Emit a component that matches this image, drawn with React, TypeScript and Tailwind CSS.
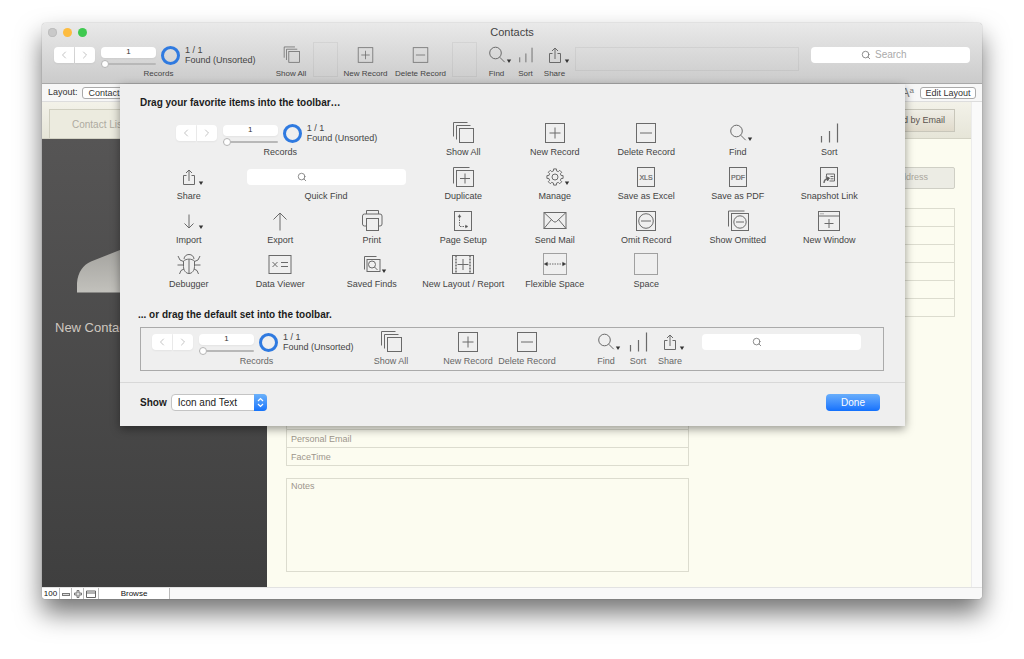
import type { ReactNode } from "react";
import { ChevronLeft, ChevronRight, Search } from "lucide-react";
import clsx from "clsx";

const LABEL = "whitespace-nowrap text-center";

function gearPath(cx: number, cy: number) {
  const points: string[] = [];
  for (let i = 0; i < 8; i++) {
    const base = (i * Math.PI) / 4;
    const corners: [number, number][] = [
      [-0.24, 6.3],
      [-0.17, 8.2],
      [0.17, 8.2],
      [0.24, 6.3],
    ];
    corners.forEach(([offset, r]) => {
      const a = base + offset;
      points.push(`${(cx + r * Math.sin(a)).toFixed(2)} ${(cy - r * Math.cos(a)).toFixed(2)}`);
    });
  }
  return `M${points.join("L")}Z`;
}

// All glyphs share a 32x26 box centred on 16,13
const GLYPHS: Record<string, ReactNode> = {
  showAll: (
    <>
      <path d="M6.5 16.5v-14H20.5M9.5 19.5v-14H23.5" />
      <rect x="12.5" y="8.5" width="14" height="14" />
    </>
  ),
  newRecord: (
    <>
      <rect x="6.5" y="3.5" width="19" height="19" />
      <path d="M10.5 13h11M16 7.5v11" />
    </>
  ),
  deleteRecord: (
    <>
      <rect x="6.5" y="3.5" width="19" height="19" />
      <path d="M10 13h12" />
    </>
  ),
  find: (
    <>
      <circle cx="14.5" cy="11" r="5.8" />
      <path d="M18.7 15.2l5 5" />
    </>
  ),
  sort: <path d="M8.5 22.5V16M16.5 22.5V11M24.5 22.5V3.5" strokeWidth="1.2" />,
  share: (
    <>
      <path d="M13.5 11.5h-3v9h11v-9h-3M16 17V6" />
      <path d="M13 9l3-3 3 3" />
    </>
  ),
  duplicate: (
    <>
      <path d="M6.5 19.5v-16H22.5" />
      <rect x="9.5" y="6.5" width="17" height="16" />
      <path d="M13 14.5h10M18 9.5v10" />
    </>
  ),
  manage: (
    <>
      <path d={gearPath(16, 13)} strokeLinejoin="round" />
      <circle cx="16" cy="13" r="3" />
    </>
  ),
  excel: (
    <>
      <rect x="7.5" y="3.5" width="17" height="19" />
      <text x="16" y="15.5" textAnchor="middle" fontSize="7" fill="#666" stroke="#666" strokeWidth="0.2">XLS</text>
    </>
  ),
  pdf: (
    <>
      <rect x="7.5" y="3.5" width="17" height="19" />
      <text x="16" y="15.5" textAnchor="middle" fontSize="7" fill="#666" stroke="#666" strokeWidth="0.2">PDF</text>
    </>
  ),
  snapshot: (
    <>
      <rect x="7.5" y="3.5" width="17" height="19" />
      <path d="M13.5 12v-2h8v7h-5M17.5 12.5h3M17.5 14.8h3" />
      <path d="M11 19c0-2.500 1.500-4 4-4.500" strokeWidth="1.4" />
      <path d="M13 12.500l3.500 1.500-2 3z" fill="#555" />
    </>
  ),
  importIcon: <path d="M16 6.5v13.5M11.5 15.5l4.500 4.500 4.500-4.500" />,
  exportIcon: <path d="M16 22.5V5M9.5 11.500l6.500-6.500 6.500 6.500" />,
  print: (
    <>
      <path d="M10.500 6V2.500h12V6" />
      <path d="M10.500 18H8.500a2 2 0 0 1-2-2V8a2 2 0 0 1 2-2h15.500a2 2 0 0 1 2 2v8a2 2 0 0 1-2 2h-1.500" />
      <rect x="10.500" y="10.500" width="12" height="12" />
    </>
  ),
  pageSetup: (
    <>
      <rect x="7.5" y="3.5" width="17" height="19" />
      <path d="M12.5 9v9.500h6.500" strokeDasharray="1.500 1" />
      <path d="M11 9l1.500-2.500L14 9zM18.500 17l2.500 1.500-2.500 1.500z" fill="#555" strokeWidth="0.4" />
    </>
  ),
  mail: (
    <>
      <rect x="5" y="4.5" width="22" height="16" />
      <path d="M5 4.500l9.500 9q1.500 1.300 3 0l9.500-9M5 20.500l7.500-9M27 20.500l-7.500-9" />
    </>
  ),
  omit: (
    <>
      <rect x="6.5" y="3.5" width="19" height="19" />
      <circle cx="16" cy="13" r="7.300" />
      <path d="M11 13h10" />
    </>
  ),
  showOmitted: (
    <>
      <path d="M6.5 18.500V3H22.500" />
      <rect x="9.5" y="5.5" width="17" height="17" />
      <circle cx="18" cy="14" r="6.200" />
      <path d="M14 14h8" />
    </>
  ),
  newWindow: (
    <>
      <rect x="5.5" y="3.5" width="21" height="19" />
      <path d="M5.500 8h21M11.500 15.500h9M16 11v9" />
      <path d="M7.500 5.800h1M9.500 5.800h1" />
    </>
  ),
  debugger: (
    <>
      <path d="M11 7c.3-2.800 2.200-4.500 5-4.500s4.700 1.700 5 4.500" />
      <path d="M10.500 9c3-2.500 8-2.500 11 0v5.500c0 4-2.500 7-5.500 7s-5.500-3-5.500-7zM16 7.500v14" />
      <path d="M10.500 9.500L7 8 5 4M21.500 9.500L25 8l2-4M10.500 13H4.500M21.500 13h6M11 17l-3 1.500-1.500 3.500M21 17l3 1.500 1.500 3.500" />
    </>
  ),
  dataViewer: (
    <>
      <rect x="5" y="3.5" width="22" height="18" />
      <path d="M8.500 10l5 5M13.500 10l-5 5M17 10.500h7M17 14.500h7" />
    </>
  ),
  savedFinds: (
    <>
      <path d="M8.5 17.500V4.500H20.500" />
      <rect x="11" y="7.500" width="13" height="12" />
      <circle cx="16" cy="12.500" r="3.500" />
      <path d="M18.500 15l3 3" />
    </>
  ),
  newLayout: (
    <>
      <rect x="5.5" y="3.5" width="21" height="18" />
      <path d="M9 3.500v18M23 3.500v18" strokeDasharray="2 1" strokeWidth="1.500" />
      <path d="M10.500 12.500h11M16 7v11" />
    </>
  ),
  flexible: (
    <>
      <rect x="4.5" y="1.5" width="23" height="21" stroke="#a0a0a0" />
      <path d="M8 12h16" strokeDasharray="1.500 1" />
      <path d="M8.500 10L5 12l3.500 2zM23.500 10l3.500 2-3.500 2z" fill="#333" strokeWidth="0.3" />
    </>
  ),
  space: <rect x="4.5" y="1.5" width="23" height="21" stroke="#a0a0a0" />,
};

function Glyph({ name, menu, small }: { name: string; menu?: boolean; small?: boolean }) {
  return (
    <svg
      viewBox="0 0 32 26"
      className={clsx("shrink-0 font-['Liberation_Sans',sans-serif]", small ? "h-5 w-[25px]" : "h-[26px] w-8")}
      fill="none"
      stroke="#6a6a6a"
      aria-hidden="true"
    >
      {GLYPHS[name]}
      {menu && <path d="M25.800 17.500h4.400L28 21z" fill="#333" stroke="none" />}
    </svg>
  );
}

type ToolProps = { label: string; icon: string; menu?: boolean; small?: boolean; className?: string };

function Tool({ label, icon, menu, small, className }: ToolProps) {
  return (
    <button type="button" className={clsx("flex flex-col items-center", className)}>
      <span className="flex h-[26px] items-center justify-center">
        <Glyph name={icon} menu={menu} small={small} />
      </span>
      <span className={LABEL}>{label}</span>
    </button>
  );
}

function Records({ className }: { className?: string }) {
  return (
    <div className={clsx("flex w-[209px] flex-col", className)}>
      <div className="flex h-[26px] items-center">
        <div className="flex h-4 gap-px text-[#c4c4c4]">
          <button type="button" aria-label="Previous record" className="flex w-5 items-center justify-center rounded-l-sm bg-white shadow-xs">
            <ChevronLeft className="h-3 w-3" />
          </button>
          <button type="button" aria-label="Next record" className="flex w-5 items-center justify-center rounded-r-sm bg-white shadow-xs">
            <ChevronRight className="h-3 w-3" />
          </button>
        </div>
        <div className="ml-1.5 flex w-[55px] flex-col pt-1">
          <input
            aria-label="Current record"
            defaultValue="1"
            className="h-[11px] w-full rounded-sm bg-white text-center text-[8px] text-[#333] shadow-xs outline-none"
          />
          <input
            type="range"
            aria-label="Record slider"
            defaultValue="0"
            className="mt-0.5 h-2 w-full appearance-none bg-transparent [&::-webkit-slider-runnable-track]:h-0.5 [&::-webkit-slider-runnable-track]:rounded-full [&::-webkit-slider-runnable-track]:bg-[#b8b8b8] [&::-webkit-slider-thumb]:-mt-[3px] [&::-webkit-slider-thumb]:h-2 [&::-webkit-slider-thumb]:w-2 [&::-webkit-slider-thumb]:appearance-none [&::-webkit-slider-thumb]:rounded-full [&::-webkit-slider-thumb]:border [&::-webkit-slider-thumb]:border-[#b5b5b5] [&::-webkit-slider-thumb]:bg-white"
          />
        </div>
        <div className="ml-[5px] h-[19px] w-[19px] shrink-0 rounded-full border-3 border-[#2f7ae0]" />
        <div className="ml-[5px] text-[9px] leading-[10px] whitespace-nowrap text-[#444]">
          <div>1 / 1</div>
          <div>Found (Unsorted)</div>
        </div>
      </div>
      <span className={LABEL}>Records</span>
    </div>
  );
}

function SearchBox({ label, placeholder }: { label: string; placeholder?: string }) {
  return (
    <label className="flex h-4 w-[159px] shrink-0 items-center rounded-sm bg-white pl-[50px]">
      <Search className="h-[10px] w-[10px] shrink-0 text-[#777]" />
      <input
        aria-label={label}
        placeholder={placeholder}
        className="ml-1 w-full min-w-0 bg-transparent text-[10px] outline-none placeholder:text-[#aaa]"
      />
    </label>
  );
}

const PALETTE: ToolProps[] = [
  { label: "Duplicate", icon: "duplicate" },
  { label: "Manage", icon: "manage", menu: true },
  { label: "Save as Excel", icon: "excel" },
  { label: "Save as PDF", icon: "pdf" },
  { label: "Snapshot Link", icon: "snapshot" },
  { label: "Import", icon: "importIcon", menu: true },
  { label: "Export", icon: "exportIcon" },
  { label: "Print", icon: "print" },
  { label: "Page Setup", icon: "pageSetup" },
  { label: "Send Mail", icon: "mail" },
  { label: "Omit Record", icon: "omit" },
  { label: "Show Omitted", icon: "showOmitted" },
  { label: "New Window", icon: "newWindow" },
  { label: "Debugger", icon: "debugger" },
  { label: "Data Viewer", icon: "dataViewer" },
  { label: "Saved Finds", icon: "savedFinds", menu: true },
  { label: "New Layout / Report", icon: "newLayout" },
  { label: "Flexible Space", icon: "flexible" },
  { label: "Space", icon: "space" },
];

function Toolbar() {
  return (
    <header className="h-[61px] rounded-t border-b border-[#a8a8a8] bg-linear-to-b from-[#e9e9e9] to-[#cbcbcb]">
      <div className="grid h-[19px] grid-cols-3 items-center px-1.5">
        <div className="flex gap-1.5">
          <button type="button" aria-label="Close" className="h-[9px] w-[9px] rounded-full bg-[#c9c9c9] ring-1 ring-[#bdbdbd] ring-inset" />
          <button type="button" aria-label="Minimize" className="h-[9px] w-[9px] rounded-full bg-[#fdbc40]" />
          <button type="button" aria-label="Zoom" className="h-[9px] w-[9px] rounded-full bg-[#3fc950]" />
        </div>
        <h1 className="text-center text-[11px] text-[#444]">Contacts</h1>
      </div>
      <div className="flex pr-3 pl-3 text-[8px] leading-3 text-[#444]">
        <Records />
        <Tool label="Show All" icon="showAll" small className="ml-1.5 w-11" />
        <div className="h-[35px] w-[25px] border border-black/5" />
        <Tool label="New Record" icon="newRecord" small className="w-[55px]" />
        <Tool label="Delete Record" icon="deleteRecord" small className="w-[55px]" />
        <div className="ml-1 h-[35px] w-[25px] border border-black/5" />
        <Tool label="Find" icon="find" menu className="ml-[5px] w-[29px]" />
        <Tool label="Sort" icon="sort" small className="w-[29px]" />
        <Tool label="Share" icon="share" menu className="w-[29px]" />
        <div className="mt-[5px] ml-1.5 h-6 flex-1 border border-black/5" />
        <div className="mt-[5px] ml-3">
          <SearchBox label="Search" placeholder="Search" />
        </div>
      </div>
    </header>
  );
}

function CustomizeSheet() {
  return (
    <section className="absolute top-[61px] right-[77px] left-[78px] bg-[#efefef] pt-3 text-[9px] leading-3 text-[#444] shadow-[0_3px_9px_rgba(0,0,0,0.4)]">
      <h2 className="pl-5 text-[10px] leading-[14px] font-bold text-[#1c1c1c]">
        Drag your favorite items into the toolbar…
      </h2>
      <div className="mt-[10px] mr-[30px] ml-[23px] grid grid-cols-8 gap-y-1.5">
        <div className="col-span-3 flex justify-center">
          <Records />
        </div>
        <Tool label="Show All" icon="showAll" />
        <Tool label="New Record" icon="newRecord" />
        <Tool label="Delete Record" icon="deleteRecord" />
        <Tool label="Find" icon="find" menu />
        <Tool label="Sort" icon="sort" />
        <Tool label="Share" icon="share" menu />
        <div className="col-span-2 flex flex-col items-center">
          <div className="flex h-[26px] items-center">
            <SearchBox label="Quick Find" />
          </div>
          <span className={LABEL}>Quick Find</span>
        </div>
        {PALETTE.map((tool) => (
          <Tool key={tool.label} {...tool} />
        ))}
      </div>

      <h2 className="mt-[18px] pl-[18px] text-[10px] leading-[14px] font-bold text-[#1c1c1c]">
        ... or drag the default set into the toolbar.
      </h2>
      <div className="mt-[5px] mr-[21px] ml-5 flex h-11 border border-[#aaa] pt-px pl-[11px] text-[#666]">
        <Records />
        <Tool label="Show All" icon="showAll" className="w-[60px]" />
        <Tool label="New Record" icon="newRecord" className="ml-[18px] w-[58px]" />
        <Tool label="Delete Record" icon="deleteRecord" className="w-[60px]" />
        <Tool label="Find" icon="find" menu className="ml-[33px] w-8" />
        <Tool label="Sort" icon="sort" className="w-8" />
        <Tool label="Share" icon="share" menu className="w-8" />
        <div className="ml-4 flex h-[26px] items-center">
          <SearchBox label="Default quick find" />
        </div>
      </div>

      <div className="mt-[11px] flex items-center justify-between border-t border-[#d8d8d8] pt-[11px] pr-[25px] pb-[15px] pl-5">
        <div className="flex items-center gap-1">
          <label htmlFor="show-mode" className="text-[10px] font-bold text-[#1c1c1c]">
            Show
          </label>
          <div className="relative">
            <select
              id="show-mode"
              className="h-[17px] w-24 appearance-none rounded-sm border border-[#c4c4c4] bg-white pl-1.5 text-[10px] text-[#222]"
            >
              <option>Icon and Text</option>
            </select>
            <svg
              viewBox="0 0 13 17"
              className="pointer-events-none absolute top-0 right-0 h-[17px] w-[13px] rounded-r-sm bg-linear-to-b from-[#6bb1fa] to-[#1473fb]"
              fill="none"
              stroke="white"
              strokeWidth="1.200"
            >
              <path d="M4 7l2.500-2.500L9 7M4 10l2.500 2.500L9 10" />
            </svg>
          </div>
        </div>
        <button
          type="button"
          className="h-[17px] w-[54px] rounded-sm bg-linear-to-b from-[#69aefb] to-[#1170fd] text-[10px] text-white"
        >
          Done
        </button>
      </div>
    </section>
  );
}

function LayoutBar() {
  return (
    <div className="flex h-[18px] items-center border-b border-[#ddd] bg-[#f7f7f7] px-1.5 text-[9px] text-[#333]">
      <span className="font-medium">Layout:</span>
      <button type="button" className="ml-1 h-3 w-24 rounded-[3px] border border-[#aaa] bg-white pl-1.5 text-left leading-[10px]">
        Contact
      </button>
      <span className="ml-auto text-[12px] leading-3 text-[#777]">
        A<sup className="text-[8px]">a</sup>
      </span>
      <button type="button" className="ml-1.5 h-3 w-14 rounded-[3px] border border-[#aaa] bg-white leading-[10px]">
        Edit Layout
      </button>
    </div>
  );
}

function ContactForm() {
  const field = "block h-[18px] w-full border-b border-[#dcdccf] px-1 text-[9px] outline-none placeholder:text-[#9c968c]";
  return (
    <main className="flex flex-1 bg-[#fcfcf0] pr-4 pl-[19px]">
      <div className="flex w-[403px] flex-col justify-end pb-[15px]">
        <div className="border-x border-t border-[#dcdccf]">
          <input aria-label="Work email" className={field} />
          <input aria-label="Personal email" placeholder="Personal Email" className={field} />
          <input aria-label="FaceTime" placeholder="FaceTime" className={field} />
        </div>
        <textarea
          aria-label="Notes"
          placeholder="Notes"
          className="mt-3 h-[94px] w-full resize-none border border-[#dcdccf] px-1 pt-px text-[9px] leading-3 outline-none placeholder:text-[#9c968c]"
        />
      </div>
      <div className="ml-4 flex-1 pt-7">
        <button type="button" className="block h-[22px] w-full rounded-xs border border-[#cfcfc5] bg-[#ecece4] pr-[26px] text-right text-[9px] text-[#aaa69c]">
          Address
        </button>
        <div className="mt-[19px] border-x border-t border-[#dcdccf]">
          {[1, 2, 3, 4, 5, 6].map((n) => (
            <input key={n} aria-label={`Address line ${n}`} className={field} />
          ))}
        </div>
      </div>
    </main>
  );
}

function StatusBar() {
  const cell = "flex items-center justify-center border-r border-[#bbb] bg-white";
  return (
    <footer className="flex h-3 overflow-hidden rounded-b-sm border-t border-[#e2e2e2] bg-[#f8f8f8] text-[8px] text-[#111]">
      <span className={clsx(cell, "w-[18px]")}>100</span>
      <button type="button" aria-label="Zoom out" className={clsx(cell, "w-3")}>
        <svg viewBox="0 0 10 10" className="h-[10px] w-[10px]" fill="#ddd" stroke="#777">
          <rect x="1.500" y="4.500" width="7" height="2" />
        </svg>
      </button>
      <button type="button" aria-label="Zoom in" className={clsx(cell, "w-3")}>
        <svg viewBox="0 0 10 10" className="h-[10px] w-[10px]" fill="#ddd" stroke="#777">
          <path d="M4 1.500h2V4h2.500v2H6v2.500H4V6H1.500V4H4z" />
        </svg>
      </button>
      <button type="button" aria-label="Toggle status area" className={clsx(cell, "w-[15px]")}>
        <svg viewBox="0 0 12 10" className="h-[10px] w-3" fill="none" stroke="#666">
          <path d="M1.500 2h9v6.500h-9zM1.500 4h9" />
        </svg>
      </button>
      <button type="button" className={clsx(cell, "w-[71px]")}>Browse</button>
    </footer>
  );
}

export default function App() {
  return (
    <div className="flex min-h-screen flex-col bg-white px-[42px] pt-[23px] pb-[60px] font-['Liberation_Sans',Arial,sans-serif]">
      <div className="relative flex flex-1 flex-col rounded-t rounded-b-sm bg-white shadow-[0_0_1px_rgba(0,0,0,0.5),0_14px_26px_rgba(0,0,0,0.55)]">
        <Toolbar />
        <LayoutBar />
        <div className="flex flex-1">
          <div className="flex flex-1 flex-col">
            <div className="flex h-[37px] justify-between border-b border-[#d3d2c4] bg-linear-to-b from-[#f3f2e9] to-[#e6e5d8] pr-4 pl-[7px]">
              <button type="button" className="mt-[7px] w-28 border-x border-t border-[#d0cfc0] bg-[#ecebdf] pl-[22px] text-left text-[10px] text-[#aeaa9f]">
                Contact List
              </button>
              <button type="button" className="mt-[7px] h-[23px] w-24 border border-[#c8c6ba] bg-linear-to-b from-[#efeee6] to-[#e0dacb] pr-[9px] text-right text-[9px] text-[#5a5450]">
                Send by Email
              </button>
            </div>
            <div className="flex flex-1">
              <aside className="w-[225px] bg-linear-to-b from-[#565555] to-[#3f3f3f] pt-[84px]">
                <svg viewBox="0 0 150 70" className="ml-[35px] h-[70px] w-[150px]">
                  <defs>
                    <linearGradient id="torso" x1="0" y1="0" x2="0" y2="1">
                      <stop offset="0" stopColor="#999894" />
                      <stop offset="1" stopColor="#c2c1bc" />
                    </linearGradient>
                  </defs>
                  <path d="M0 69.500V60C1 49 6 42 14 38.500L43 27 75 10l32 17 29 11.500c8 3.500 13 10.500 14 21.500v9.500z" fill="url(#torso)" />
                </svg>
                <p className="mt-[25px] pl-[13px] text-[13px] leading-5 text-[#cfc8c0]">New Contact</p>
              </aside>
              <ContactForm />
            </div>
          </div>
          <div className="w-[11px] border-l border-[#ececec] bg-[#fafafa]" />
        </div>
        <StatusBar />
        <CustomizeSheet />
      </div>
    </div>
  );
}
